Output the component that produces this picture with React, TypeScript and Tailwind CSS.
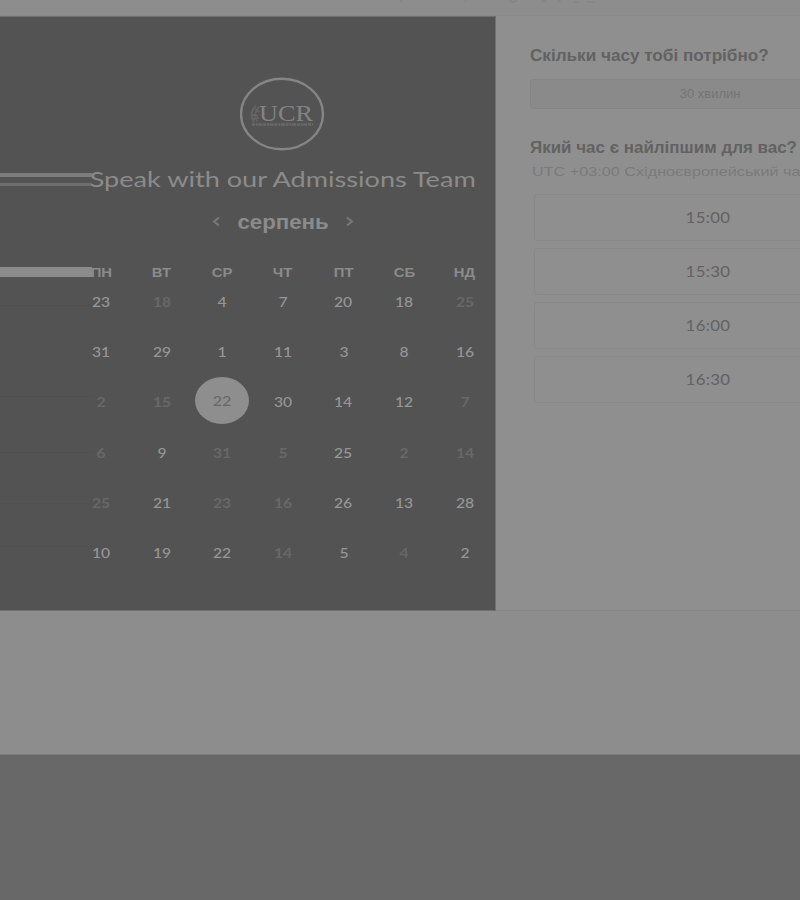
import React from "react";

const DAYS = ["ПН", "ВТ", "СР", "ЧТ", "ПТ", "СБ", "НД"];

// Positive numbers are bookable; negative numbers are shown dimmed.
const WEEKS = [
  [23, -18, 4, 7, 20, 18, -25],
  [31, 29, 1, 11, 3, 8, 16],
  [-2, -15, 22, 30, 14, 12, -7],
  [-6, 9, -31, -5, 25, -2, -14],
  [-25, 21, -23, -16, 26, 13, 28],
  [10, 19, 22, -14, 5, -4, 2],
];

const TIMES = ["15:00", "15:30", "16:00", "16:30"];

function Logo() {
  return (
    <svg width="86" height="74" viewBox="0 0 86 74" fill="none">
      <ellipse cx="42" cy="37" rx="41" ry="35.3" stroke="#858585" strokeWidth="2.4" />
      <path d="M16 29c-5 3-6 12-2 16M19 30c-4 4-5 10-2 14M15 32l4 3M12 38l6 1M13 42l6-1" stroke="#666" strokeWidth="1.6" />
      <text x="19" y="44" fontFamily="Liberation Serif, serif" fontSize="24" fill="#828282" textLength="54" lengthAdjust="spacingAndGlyphs">UCR</text>
      <path d="M12 47.5h61" stroke="#696969" strokeWidth="2.6" strokeDasharray="3 0.8 2 0.6 4 0.8" />
    </svg>
  );
}

function DayCell({ value, selected }: { value: number; selected: boolean }) {
  if (selected) {
    return (
      <div className="flex h-[50.3px] items-center justify-center">
        <div className="-mt-[3px] flex h-[47px] w-[54px] items-center justify-center rounded-[50%] bg-[#8e8e8e]">
          <span className="scale-x-[1.15] text-[14px] text-[#666]">{value}</span>
        </div>
      </div>
    );
  }
  return (
    <div className="flex h-[50.3px] items-center justify-center">
      <span className={value < 0 ? "scale-x-[1.12] text-[14px] font-bold text-[#686868]" : "scale-x-[1.12] text-[14px] font-medium text-[#979797]"}>
        {Math.abs(value)}
      </span>
    </div>
  );
}

export default function App() {
  return (
    <div className="flex h-[900px] w-[800px] flex-col overflow-hidden bg-[#8d8d8d] font-['Lato','Noto_Sans',sans-serif]">
      <header className="h-4 shrink-0 border-b border-[#898989] pl-[398px]">
        <svg width="210" height="5" viewBox="0 0 210 5" fill="none" stroke="#828282">
          <path d="M3 0v2M69 0q-1 2-3 2M111 0q4 4 8 0M144 1h4M160 1h3M176 2h5M188 2h9" />
        </svg>
      </header>
      <main className="flex h-[595px] shrink-0">
        <section className="flex h-full w-[496px] shrink-0 border-r border-t border-b border-[#707070] bg-[#535353]">
          <div className="flex w-[92px] shrink-0 flex-col">
            <div className="mt-[156px] h-[4px] bg-[#7d7d7d]" />
            <div className="mt-[6px] h-[3px] bg-[#6e6e6e]" />
            <div className="mt-[81px] h-[10px] bg-[#8b8b8b]" />
            <div className="mt-[28px] h-px bg-[#505050]" />
            <div className="mt-[90px] h-px bg-[#505050]" />
            <div className="mt-[55px] h-px bg-[#505050]" />
            <div className="mt-[50px] h-px bg-[#505050]" />
            <div className="mt-[42px] h-px bg-[#505050]" />
          </div>
          <div className="-ml-[21px] flex w-[424px] shrink-0 flex-col items-center">
            <div className="mt-[60px] h-[74px]"><Logo /></div>
            <h1 className="mt-[12px] h-8 scale-x-[1.232] whitespace-nowrap text-[22px] leading-8 text-[#8b8b8b]">Speak with our Admissions Team</h1>
            <div className="mt-[11px] flex h-8 w-[142px] items-center justify-between font-['Liberation_Sans',sans-serif]">
              <svg width="8" height="12" viewBox="0 0 8 12" fill="none"><path d="M7 1.5 2 5.5 7 9.5" stroke="#787878" strokeWidth="2" /></svg>
              <span className="scale-x-[1.06] text-[21px] font-bold text-[#8b8b8b]">серпень</span>
              <svg width="8" height="12" viewBox="0 0 8 12" fill="none"><path d="M1 1.5 6 5.5 1 9.5" stroke="#787878" strokeWidth="2" /></svg>
            </div>
            <div className="mt-[25px] grid h-[20px] w-full grid-cols-7 font-['Liberation_Sans',sans-serif]">
              {DAYS.map((d) => (
                <div key={d} className="flex items-center justify-center">
                  <span className="scale-x-[1.14] text-[13px] font-bold text-[#8b8b8b]">{d}</span>
                </div>
              ))}
            </div>
            <div className="-mt-[7px] grid w-full grid-cols-7">
              {WEEKS.flatMap((week, r) =>
                week.map((v, c) => <DayCell key={`${r}-${c}`} value={v} selected={r === 2 && c === 2} />)
              )}
            </div>
          </div>
        </section>
        <section className="flex min-w-0 flex-1 flex-col overflow-hidden border-b border-[#868686] bg-[#8f8f8f] pl-[34px] font-['Liberation_Sans',sans-serif]">
          <h2 className="mt-[28px] h-6 w-fit origin-left scale-x-[1.07] whitespace-nowrap text-[16px] font-bold leading-6 text-[#626262]">Скільки часу тобі потрібно?</h2>
          <div className="mt-[11px] flex h-[30px] w-[360px] items-center justify-center rounded-[3px] border border-[#858585] bg-[#8a8a8a]">
            <span className="scale-x-[1.08] text-[12px] text-[#757575]">30 хвилин</span>
          </div>
          <h2 className="mt-[27px] h-6 w-fit origin-left scale-x-[1.06] whitespace-nowrap text-[16px] font-bold leading-6 text-[#626262]">Який час є найліпшим для вас?</h2>
          <p className="ml-[2px] mt-[2px] h-5 w-fit origin-left scale-x-[1.2] whitespace-nowrap text-[13.5px] leading-5 text-[#7a7a7a]">UTC +03:00 Східноєвропейський час</p>
          <div className="ml-[4px] mt-[12px] flex w-[348px] flex-col gap-[7px] font-['Lato',sans-serif]">
            {TIMES.map((t) => (
              <button key={t} className="flex h-[47px] items-center justify-center rounded-[3px] border border-[#888888]">
                <span className="scale-x-[1.12] text-[15px] tracking-[0.3px] text-[#626262]">{t}</span>
              </button>
            ))}
          </div>
        </section>
      </main>
      <div className="h-[143px] shrink-0" />
      <footer className="flex-1 border-t border-[#7b7b7b] bg-[#686868]" />
    </div>
  );
}
